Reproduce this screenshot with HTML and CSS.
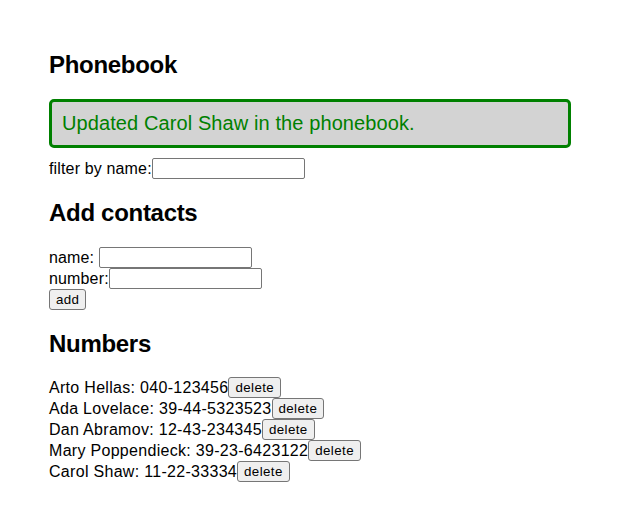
FILE: index.html
```html
<!DOCTYPE html>
<html>
<head>
<meta charset="utf-8">
<link rel="stylesheet" href="styles.css">
</head>
<body>
<div class="app">
  <h2 class="title">Phonebook</h2>
  <div class="notification">Updated Carol Shaw in the phonebook.</div>
  <div class="row">filter by name:<input class="field" type="text"></div>
  <h2 class="title">Add contacts</h2>
  <form class="form">
    <div class="row">name: <input class="field" type="text"></div>
    <div class="row">number:<input class="field" type="text"></div>
    <div class="row"><button class="btn" type="button">add</button></div>
  </form>
  <h2 class="title">Numbers</h2>
  <div class="person">Arto Hellas: 040-123456<button class="btn" type="button">delete</button></div>
  <div class="person">Ada Lovelace: 39-44-5323523<button class="btn" type="button">delete</button></div>
  <div class="person">Dan Abramov: 12-43-234345<button class="btn" type="button">delete</button></div>
  <div class="person">Mary Poppendieck: 39-23-6423122<button class="btn" type="button">delete</button></div>
  <div class="person">Carol Shaw: 11-22-33334<button class="btn" type="button">delete</button></div>
</div>
</body>
</html>
```
FILE: styles.css
```css
html, body {
  margin: 0;
  background: #fff;
}
body {
  font-family: "Liberation Sans", Arial, sans-serif;
  font-size: 16px;
  color: #000;
}
.app {
  padding: 31px 49px 0;
  letter-spacing: 0.15px;
}
.title {
  font-size: 24px;
  font-weight: bold;
  margin: 19.92px 0;
  letter-spacing: -0.3px;
}
.notification {
  color: green;
  background: lightgrey;
  font-size: 20px;
  border: 3px solid green;
  border-radius: 5px;
  padding: 10px;
  margin-bottom: 10px;
  letter-spacing: 0.1px;
}
.form {
  margin: 0;
}
.row {
  line-height: 21px;
}
.field {
  box-sizing: border-box;
  width: 153px;
  height: 21px;
  border: 1px solid #767676;
  border-radius: 2px;
  padding: 1px 2px;
  font-family: "Liberation Sans", Arial, sans-serif;
  font-size: 13.33px;
  vertical-align: bottom;
  margin: 0;
  background: #fff;
}
.btn {
  font-family: "Liberation Sans", Arial, sans-serif;
  font-size: 13.33px;
  line-height: 17px;
  letter-spacing: 0.4px;
  background: #efefef;
  border: 1px solid #767676;
  border-radius: 3px;
  padding: 1px 6px;
  margin: 0;
  color: #000;
  vertical-align: bottom;
}
.person {
  line-height: 21px;
  letter-spacing: 0.3px;
}
```
